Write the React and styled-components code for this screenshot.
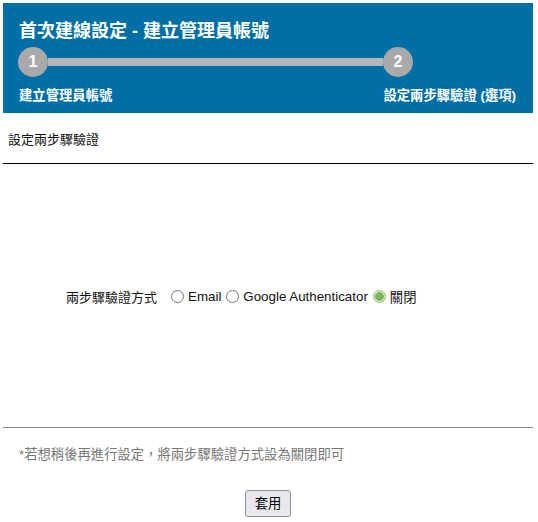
import React, { useState } from "react";
import styled, { createGlobalStyle } from "styled-components";

const GlobalStyle = createGlobalStyle`
  body {
    margin: 0;
    background: #fff;
    font-family: "Liberation Sans", "Noto Sans CJK TC", sans-serif;
  }
`;

const Page = styled.div`
  width: 530px;
  padding: 3px;
`;

const Header = styled.div`
  background: #006fa6;
  color: #fff;
  height: 110px;
  box-sizing: border-box;
  padding: 17px 17px 0 15px;
  display: flex;
  flex-direction: column;
`;

const Title = styled.h1`
  margin: 0 0 0 1px;
  font-size: 18px;
  line-height: 22px;
  font-weight: bold;
`;

const Progress = styled.div`
  width: 395px;
  margin-top: 5px;
  display: flex;
  align-items: center;
`;

const Step = styled.div`
  width: 30px;
  height: 30px;
  border-radius: 50%;
  background: #a9a9a9;
  color: #fff;
  font-weight: bold;
  font-size: 16px;
  display: flex;
  align-items: center;
  justify-content: center;
  flex: none;
`;

const Track = styled.div`
  flex: 1;
  height: 8px;
  background: #b5b5b5;
`;

const Labels = styled.div`
  display: flex;
  justify-content: space-between;
  margin-top: 10px;
  padding-left: 1px;
  font-size: 13.33px;
  font-weight: bold;
  line-height: 17px;
`;

const SectionTitle = styled.div`
  font-size: 13px;
  line-height: 17px;
  padding: 18px 5px 15px;
  border-bottom: 1px solid #000;
  color: #111;
`;

const Content = styled.div`
  height: 264px;
  box-sizing: border-box;
  padding: 2px 0 0 63px;
  display: flex;
  align-items: center;
  border-bottom: 1px solid #888;
  font-size: 13px;
  color: #111;
`;

const FieldLabel = styled.span`
  margin-right: 9px;
`;

const Option = styled.label`
  display: inline-flex;
  align-items: center;
  font-size: 13.33px;
`;

const Radio = styled.input.attrs({ type: "radio" })`
  appearance: none;
  width: 13px;
  height: 13px;
  margin: 0 4px 0 5px;
  border: 1px solid #767676;
  border-radius: 50%;
  background: #fff;
  box-sizing: border-box;
  &:checked {
    border-color: #8fc173;
    background: radial-gradient(circle, #79b35a 0 4px, #d3eac5 4.5px);
  }
`;

const Note = styled.div`
  padding: 18px 0 0 16px;
  font-size: 13.33px;
  line-height: 17px;
  color: #777;
`;

const Footer = styled.div`
  display: flex;
  justify-content: center;
  padding-top: 27px;
`;

const Button = styled.button`
  font-family: inherit;
  font-size: 13.33px;
  line-height: 17px;
  padding: 4px 9px;
  border: 1px solid #8f8f9d;
  border-radius: 3px;
  background: #e9e9ed;
  color: #000;
`;

export default function App() {
  const [mode, setMode] = useState("off");
  const options = [
    { value: "email", label: "Email" },
    { value: "google", label: "Google Authenticator" },
    { value: "off", label: "關閉" },
  ];
  return (
    <Page>
      <GlobalStyle />
      <Header>
        <Title>首次建線設定 - 建立管理員帳號</Title>
        <Progress>
          <Step>1</Step>
          <Track />
          <Step>2</Step>
        </Progress>
        <Labels>
          <span>建立管理員帳號</span>
          <span>設定兩步驟驗證 (選項)</span>
        </Labels>
      </Header>
      <SectionTitle>設定兩步驟驗證</SectionTitle>
      <Content>
        <FieldLabel>兩步驟驗證方式</FieldLabel>
        {options.map((o) => (
          <Option key={o.value}>
            <Radio
              name="tfa"
              checked={mode === o.value}
              onChange={() => setMode(o.value)}
            />
            {o.label}
          </Option>
        ))}
      </Content>
      <Note>*若想稍後再進行設定，將兩步驟驗證方式設為關閉即可</Note>
      <Footer>
        <Button>套用</Button>
      </Footer>
    </Page>
  );
}
